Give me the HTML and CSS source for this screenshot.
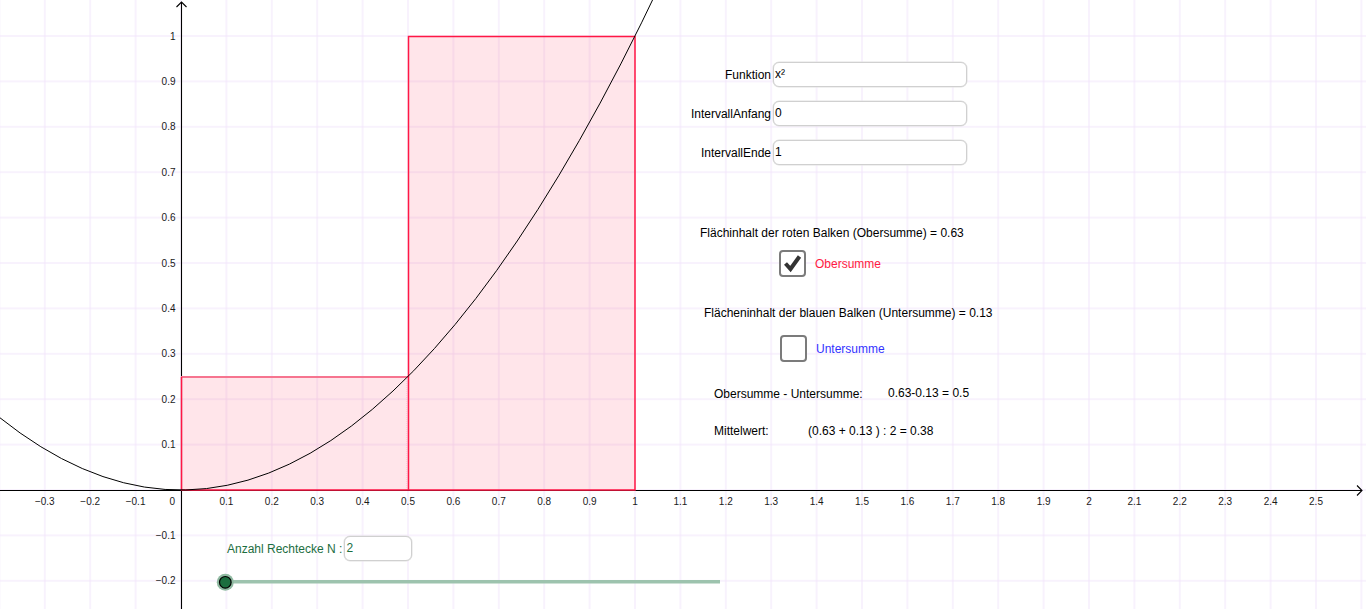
FILE: index.html
```html
<!DOCTYPE html>
<html lang="de">
<head>
<meta charset="utf-8">
<title>Obersumme und Untersumme</title>
<link rel="stylesheet" href="styles.css">
</head>
<body>
<div class="applet">
  <svg class="board" width="1366" height="609" viewBox="0 0 1366 609" xmlns="http://www.w3.org/2000/svg">
    <defs>
      <pattern id="grid" x="158.3" y="467.3" width="45.4" height="45.4" patternUnits="userSpaceOnUse">
        <path d="M22.7 0 V45.4 M0 22.7 H45.4" stroke="#f2e5fb" stroke-width="1" fill="none"/>
      </pattern>
    </defs>
    <rect x="0" y="0" width="1366" height="609" fill="url(#grid)"/>

    <!-- axes -->
    <g stroke="#000" stroke-width="1.1" fill="none">
      <path d="M0 490.5 H1362"/>
      <path d="M1357 485.5 L1362 490.5 L1357 495.5"/>
      <path d="M181.5 609 V2"/>
      <path d="M176.5 7 L181.5 2 L186.5 7"/>
    </g>

    <!-- Obersumme rectangles -->
    <rect x="181" y="376.5" width="227" height="113.5" fill="rgba(255,0,51,0.1)"/>
    <rect x="408" y="36" width="227" height="454" fill="rgba(255,0,51,0.1)"/>
    <path d="M181 377 H408" stroke="#f6748f" stroke-width="2" fill="none"/>
    <path d="M406.8 377 V490" stroke="#f7c3cd" stroke-width="0.8" stroke-dasharray="1 1" fill="none"/>
    <g stroke="#ff1744" stroke-width="1.5" fill="none">
      <path d="M181.5 377 V490 H408"/>
      <path d="M408.5 490 V36.5 H635 V490 H408"/>
    </g>

    <!-- f(x) = x^2 -->
    <path d="M-0.6 417.36 Q330.82 682.5 662.24 -20.11" stroke="#000" stroke-width="1" fill="none"/>

    <!-- x labels -->
    <g class="axis-label" text-anchor="middle">
      <text x="44.8" y="504.5">−0.3</text>
      <text x="90.2" y="504.5">−0.2</text>
      <text x="135.6" y="504.5">−0.1</text>
      <text x="226.4" y="504.5">0.1</text>
      <text x="271.8" y="504.5">0.2</text>
      <text x="317.2" y="504.5">0.3</text>
      <text x="362.6" y="504.5">0.4</text>
      <text x="408" y="504.5">0.5</text>
      <text x="453.4" y="504.5">0.6</text>
      <text x="498.8" y="504.5">0.7</text>
      <text x="544.2" y="504.5">0.8</text>
      <text x="589.6" y="504.5">0.9</text>
      <text x="635" y="504.5">1</text>
      <text x="680.4" y="504.5">1.1</text>
      <text x="725.8" y="504.5">1.2</text>
      <text x="771.2" y="504.5">1.3</text>
      <text x="816.6" y="504.5">1.4</text>
      <text x="862" y="504.5">1.5</text>
      <text x="907.4" y="504.5">1.6</text>
      <text x="952.8" y="504.5">1.7</text>
      <text x="998.2" y="504.5">1.8</text>
      <text x="1043.6" y="504.5">1.9</text>
      <text x="1089" y="504.5">2</text>
      <text x="1134.4" y="504.5">2.1</text>
      <text x="1179.8" y="504.5">2.2</text>
      <text x="1225.2" y="504.5">2.3</text>
      <text x="1270.6" y="504.5">2.4</text>
      <text x="1316" y="504.5">2.5</text>
    </g>
    <!-- y labels -->
    <g class="axis-label" text-anchor="end">
      <text x="175" y="504.5">0</text>
      <text x="175.5" y="39.6">1</text>
      <text x="175.5" y="85">0.9</text>
      <text x="175.5" y="130.4">0.8</text>
      <text x="175.5" y="175.8">0.7</text>
      <text x="175.5" y="221.2">0.6</text>
      <text x="175.5" y="266.6">0.5</text>
      <text x="175.5" y="312">0.4</text>
      <text x="175.5" y="357.4">0.3</text>
      <text x="175.5" y="402.8">0.2</text>
      <text x="175.5" y="448.2">0.1</text>
      <text x="175.5" y="539">−0.1</text>
      <text x="175.5" y="584.4">−0.2</text>
    </g>

    <!-- slider N -->
    <path d="M225 581.8 H720" stroke="#9dc3ae" stroke-width="3.6" fill="none"/>
    <circle cx="225.3" cy="582.3" r="8.5" fill="#8fb9a1"/>
    <circle cx="225.3" cy="582.3" r="5.8" fill="#1c6e3f" stroke="#000" stroke-width="1.2"/>
  </svg>

  <div class="fields">
    <div class="field"><span class="field-label">Funktion</span><span class="input">x²</span></div>
    <div class="field"><span class="field-label">IntervallAnfang</span><span class="input">0</span></div>
    <div class="field"><span class="field-label">IntervallEnde</span><span class="input">1</span></div>
  </div>

  <div class="text area-ober">Flächinhalt der roten Balken (Obersumme) = 0.63</div>
  <div class="checkbox check-ober">
    <svg width="23" height="23" viewBox="0 0 23 23"><path d="M4.5 11.5 L9.5 17 L18.5 4.5" stroke="#333" stroke-width="4" fill="none" stroke-linejoin="miter"/></svg>
  </div>
  <div class="text label-ober">Obersumme</div>

  <div class="text area-unter">Flächeninhalt der blauen Balken (Untersumme) = 0.13</div>
  <div class="checkbox check-unter"></div>
  <div class="text label-unter">Untersumme</div>

  <div class="text diff-label">Obersumme - Untersumme:</div>
  <div class="text diff-value">0.63-0.13 = 0.5</div>
  <div class="text mean-label">Mittelwert:</div>
  <div class="text mean-value">(0.63 + 0.13 ) : 2 = 0.38</div>

  <div class="n-field"><span class="n-label">Anzahl Rechtecke N :</span><span class="input n-input">2</span></div>
</div>
</body>
</html>
```

FILE: styles.css
```css
body {
  margin: 0;
  background: #fff;
  font-family: "Liberation Sans", Arial, sans-serif;
  overflow: hidden;
}

.applet {
  position: relative;
  width: 1366px;
  height: 609px;
  overflow: hidden;
  background: #fff;
}

.board {
  display: block;
}

.axis-label {
  font-family: "Liberation Sans", Arial, sans-serif;
  font-size: 10px;
  fill: #1a1a1a;
}

.fields {
  position: absolute;
  left: 660px;
  top: 62px;
  display: flex;
  flex-direction: column;
  gap: 14px;
}

.field {
  display: flex;
  align-items: center;
  gap: 2px;
}

.field-label {
  width: 111px;
  text-align: right;
  font-size: 12px;
  color: #000;
  white-space: nowrap;
}

.input {
  display: block;
  box-sizing: border-box;
  width: 194px;
  height: 25px;
  border: 1px solid #d0d0d0;
  border-radius: 6px;
  box-shadow: 0 0 0 0.5px #e2e2e2;
  background: #fff;
  font-size: 12px;
  line-height: 23px;
  padding-left: 1px;
  color: #000;
}

.text {
  position: absolute;
  font-size: 12px;
  line-height: 14px;
  white-space: nowrap;
  color: #000;
}

.area-ober { left: 700px; top: 226px; }
.label-ober { left: 815px; top: 257px; color: #ff1a42; }
.area-unter { left: 704px; top: 306px; }
.label-unter { left: 816px; top: 342px; color: #3333ff; }
.diff-label { left: 714px; top: 387px; }
.diff-value { left: 888px; top: 386px; }
.mean-label { left: 714px; top: 424px; }
.mean-value { left: 808px; top: 424px; }

.checkbox {
  position: absolute;
  box-sizing: border-box;
  width: 27px;
  height: 27px;
  border: 2px solid #7b7b7b;
  border-radius: 4px;
  background: #fff;
}

.checkbox svg {
  display: block;
}

.check-ober { left: 779px; top: 250px; }
.check-unter { left: 780px; top: 335px; }

.n-field {
  position: absolute;
  left: 227px;
  top: 536px;
  display: flex;
  align-items: center;
  gap: 2px;
}

.n-label {
  font-size: 12px;
  color: #1c6e3f;
  white-space: nowrap;
  padding-top: 1px;
}

.n-input {
  width: 68px;
  color: #1c6e3f;
}
```
